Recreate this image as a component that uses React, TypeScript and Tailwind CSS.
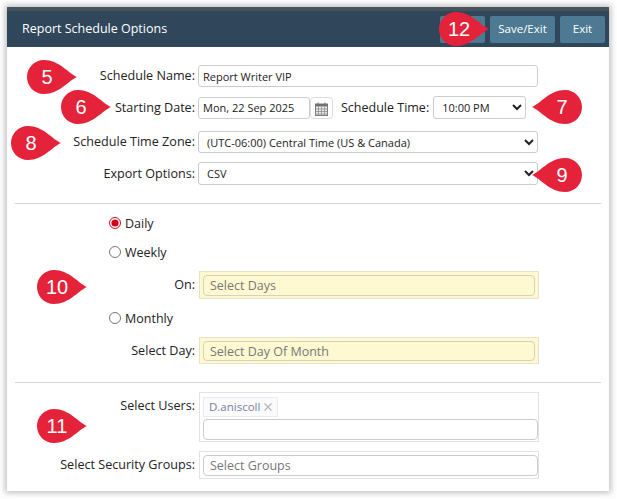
const font = { fontFamily: '"Open Sans", sans-serif' };

function Pin({ n, className, left }: { n: string; className: string; left?: boolean }) {
  return (
    <div className={`absolute w-[52px] h-[36px] ${className}`}>
      <svg viewBox="0 0 52 36" className="absolute inset-0 w-full h-full">
        {left ? (
          <path d="M1 18 C10 14 19 1 34 1 C44 1 51 9 51 18 C51 27 44 35 34 35 C19 35 10 22 1 18 Z" fill="#e4233b" />
        ) : (
          <path d="M51 18 C42 14 33 1 18 1 C8 1 1 9 1 18 C1 27 8 35 18 35 C33 35 42 22 51 18 Z" fill="#e4233b" />
        )}
      </svg>
      <span
        className={`absolute top-0 h-[36px] leading-[36px] w-[42px] text-center text-white text-[20px] font-['Liberation_Sans',sans-serif] ${left ? "right-0" : "left-0"}`}
      >
        {n}
      </span>
    </div>
  );
}

function Label({ children }: { children: string }) {
  return <label className="w-[188px] shrink-0 pt-[1px] text-right text-[12.6px] text-[#222]">{children}</label>;
}

function CalendarIcon() {
  return (
    <svg viewBox="0 0 13 14" className="w-[13px] h-[14px] mt-[3px]">
      <rect x="0.5" y="2" width="12" height="11.5" fill="#f3ebdd" stroke="#7d7a80" />
      <rect x="0.5" y="2" width="12" height="2.5" fill="#6e7078" />
      <path d="M3 0.5V2.5M10 0.5V2.5" stroke="#6e7078" />
      <path d="M1 7H12M1 9.5H12M1 12H12M3.5 5V13M6.5 5V13M9.5 5V13" stroke="#8b86a0" strokeWidth="0.8" />
    </svg>
  );
}

function Radio({ label, checked, className }: { label: string; checked?: boolean; className: string }) {
  return (
    <div className={`pl-[102px] h-[15px] flex items-center gap-[4px] text-[12.5px] text-[#222] ${className}`}>
      <input type="radio" defaultChecked={checked} name="freq" className="w-[12px] h-[12px] m-0 accent-[#d0021b]" />
      <span className="pt-[3px]">{label}</span>
    </div>
  );
}

function YellowBox({ placeholder, tall }: { placeholder: string; tall?: boolean }) {
  return (
    <div className={`w-[340px] ml-[1px] bg-[#fff9d2] border border-[#e6e3c6] pt-[3px] pb-[2px] px-[3px] flex ${tall ? "h-[28px]" : "h-[27px]"}`}>
      <div className="flex-1 border border-[#d4d2bc] rounded-[4px] px-[6px] text-[12.5px] leading-[20px] text-[#777]">{placeholder}</div>
    </div>
  );
}

export default function App() {
  return (
    <div style={font} className="w-[617px] h-[499px] bg-white overflow-hidden relative pt-[7px] pl-[7px]">
      <div className="w-[602px] h-[484px] bg-white shadow-[0_0_6px_2px_rgba(0,0,0,0.25)]">
        <div className="h-[4px] bg-[#46555c]" />
        <div className="h-[36px] bg-[#2f465b] flex items-center pl-[15px] pr-[4px]">
          <span className="text-white text-[12.5px] flex-1">Report Schedule Options</span>
          <div className="flex gap-[5px] text-[11.5px] text-white">
            <button className="w-[45px] h-[27px] bg-[#4d7a92] rounded-[2px]" />
            <button className="w-[65px] h-[27px] bg-[#4d7a92] rounded-[2px]">Save/Exit</button>
            <button className="w-[45px] h-[27px] bg-[#4d7a92] rounded-[2px]">Exit</button>
          </div>
        </div>

        <div className="pt-[18px]">
          <div className="flex items-center gap-[3px] h-[22px]">
            <Label>Schedule Name:</Label>
            <input
              readOnly
              value="Report Writer VIP"
              className="w-[340px] h-[22px] border border-[#ccc] rounded-[3px] px-[4px] text-[11px] text-[#222]"
            />
          </div>

          <div className="flex items-center gap-[3px] h-[23px] mt-[9px]">
            <Label>Starting Date:</Label>
            <input
              readOnly
              value="Mon, 22 Sep 2025"
              className="w-[112px] h-[22px] border border-[#ccc] rounded-[3px] px-[4px] text-[11px] text-[#222]"
            />
            <div className="w-[23px] h-[22px] -ml-[3px] border border-[#ddd] rounded-[4px] flex items-center justify-center">
              <CalendarIcon />
            </div>
            <label className="text-[12.5px] pt-[1px] text-[#222] ml-[5px]">Schedule Time:</label>
            <select className="w-[93px] h-[23px] ml-[1px] border border-[#ccc] rounded-[3px] pl-[4px] text-[11px] text-[#222] bg-white">
              <option>10:00 PM</option>
            </select>
          </div>

          <div className="flex items-center gap-[3px] h-[22px] mt-[12px]">
            <Label>Schedule Time Zone:</Label>
            <select className="w-[340px] h-[22px] border border-[#ccc] rounded-[3px] pl-[4px] text-[11px] text-[#222] bg-white">
              <option>(UTC-06:00) Central Time (US &amp; Canada)</option>
            </select>
          </div>

          <div className="flex items-center gap-[3px] h-[23px] mt-[9px]">
            <Label>Export Options:</Label>
            <select className="w-[340px] h-[23px] border border-[#ccc] rounded-[3px] pl-[4px] text-[11px] text-[#222] bg-white">
              <option>CSV</option>
            </select>
          </div>

          <div className="h-px bg-[#d4d4d4] mx-[8px] mt-[18px]" />

          <Radio label="Daily" checked className="mt-[11px]" />
          <Radio label="Weekly" className="mt-[14px]" />
          <div className="flex items-center gap-[3px] h-[28px] mt-[12px]">
            <Label>On:</Label>
            <YellowBox placeholder="Select Days" tall />
          </div>
          <Radio label="Monthly" className="mt-[11px]" />
          <div className="flex items-center gap-[3px] h-[27px] mt-[12px]">
            <Label>Select Day:</Label>
            <YellowBox placeholder="Select Day Of Month" />
          </div>

          <div className="h-px bg-[#d4d4d4] mx-[8px] mt-[18px]" />

          <div className="flex items-start gap-[3px] mt-[9px]">
            <div className="pt-[5px] w-[188px] shrink-0 text-right text-[12.6px] text-[#222]">Select Users:</div>
            <div className="w-[340px] h-[50px] ml-[1px] border border-[#e3e3e3] pl-[3px] pt-[4px]">
              <div className="w-[75px] flex items-center h-[20px] border border-[#eaeaf2] bg-[#fbfbfe] px-[5px] justify-between text-[11.5px] text-[#7a7f9a]">
                D.aniscoll
                <svg viewBox="0 0 8 8" className="w-[8px] h-[8px]">
                  <path d="M0.5 0.5L7.5 7.5M7.5 0.5L0.5 7.5" stroke="#b5b5b5" strokeWidth="1.2" />
                </svg>
              </div>
              <div className="w-[335px] h-[21px] border border-[#ccc] rounded-[4px] mt-[2px]" />
            </div>
          </div>
          <div className="flex items-center gap-[3px] h-[28px] mt-[9px]">
            <Label>Select Security Groups:</Label>
            <div className="w-[340px] h-[28px] ml-[1px] border border-[#e3e3e3] pl-[3px] pt-[3px]">
              <div className="w-[335px] h-[21px] border border-[#ccc] rounded-[4px] px-[6px] text-[12.5px] leading-[20px] text-[#777]">Select Groups</div>
            </div>
          </div>
        </div>
      </div>

      <Pin n="5" className="left-[26px] top-[59px]" />
      <Pin n="6" className="left-[60px] top-[89px]" />
      <Pin n="8" className="left-[10px] top-[125px]" />
      <Pin n="10" className="left-[36px] top-[269px]" />
      <Pin n="11" className="left-[36px] top-[408px]" />
      <Pin n="12" className="left-[438px] top-[11px]" />
      <Pin n="7" left className="left-[531px] top-[89px]" />
      <Pin n="9" left className="left-[531px] top-[157px]" />
    </div>
  );
}
